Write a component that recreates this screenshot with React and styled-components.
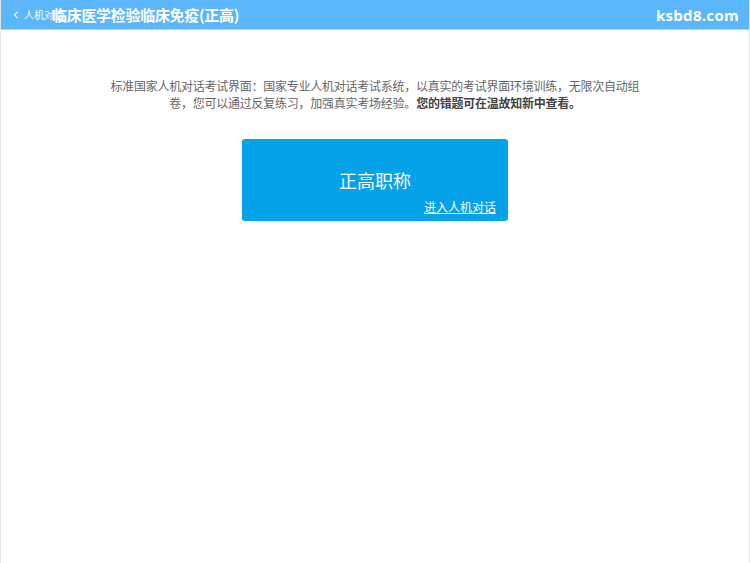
import React from "react";
import styled, { createGlobalStyle } from "styled-components";

const Global = createGlobalStyle`
  html, body { margin: 0; padding: 0; background: #fff; }
  body { font-family: "Noto Sans CJK SC", "Liberation Sans", sans-serif; }
  #root { min-height: 563px; }
`;

const Page = styled.div`
  width: 750px;
  height: 563px;
  box-sizing: border-box;
  border-left: 1px solid #e2e2e2;
  border-right: 1px solid #e2e2e2;
  display: flex;
  flex-direction: column;
  overflow: hidden;
`;

const Header = styled.header`
  position: relative;
  height: 29px;
  background: #5bb6fb;
  border-bottom: 1px solid #a9d8fd;
  display: flex;
  align-items: center;
  justify-content: space-between;
  padding: 0 11px 0 52px;
  color: #fff;
  flex-shrink: 0;
  margin: 0 -1px;
`;

const Back = styled.a`
  position: absolute;
  left: 13px;
  top: 8px;
  font-size: 10px;
  line-height: 14px;
  color: #fff;
  text-decoration: none;
  display: flex;
  align-items: center;
  gap: 5px;
`;

const Title = styled.h1`
  position: relative;
  margin: 0;
  font-size: 15px;
  font-weight: 700;
  letter-spacing: -0.3px;
  line-height: 20px;
`;

const Site = styled.div`
  font-family: "Open Sans", "Liberation Sans", sans-serif;
  font-size: 15px;
  font-weight: 700;
  letter-spacing: 0.3px;
`;

const Main = styled.main`
  display: flex;
  flex-direction: column;
  align-items: center;
  padding-top: 47px;
`;

const Desc = styled.p`
  width: 540px;
  margin: 0;
  text-align: center;
  font-size: 12px;
  line-height: 17px;
  letter-spacing: -0.25px;
  color: #666;
`;

const Strong = styled.b`
  color: #444;
  font-weight: 700;
`;

const Card = styled.button`
  margin-top: 28px;
  width: 266px;
  height: 82px;
  border: none;
  border-radius: 3px;
  background: #05a1e9;
  color: #fff;
  display: flex;
  flex-direction: column;
  align-items: stretch;
  padding: 0 12px 6px;
  box-sizing: border-box;
  font-family: inherit;
  cursor: pointer;
`;

const CardTitle = styled.div`
  flex: 1;
  display: flex;
  align-items: flex-end;
  justify-content: center;
  font-size: 18px;
  line-height: 24px;
  padding-bottom: 7px;
`;

const CardLink = styled.span`
  align-self: flex-end;
  font-size: 12px;
  line-height: 16px;
  text-decoration: underline;
`;

export default function App() {
  return (
    <>
      <Global />
      <Page>
        <Header>
          <Back href="#">
            <svg width="6" height="8" viewBox="0 0 6 8" fill="none">
              <path d="M4.5 0.8L1.5 4L4.5 7.2" stroke="#fff" strokeWidth="1.1" />
            </svg>
            人机对话
          </Back>
          <Title>临床医学检验临床免疫(正高)</Title>
          <Site>ksbd8.com</Site>
        </Header>
        <Main>
          <Desc>
            标准国家人机对话考试界面：国家专业人机对话考试系统，以真实的考试界面环境训练，无限次自动组卷，您可以通过反复练习，加强真实考场经验。
            <Strong>您的错题可在温故知新中查看。</Strong>
          </Desc>
          <Card>
            <CardTitle>正高职称</CardTitle>
            <CardLink>进入人机对话</CardLink>
          </Card>
        </Main>
      </Page>
    </>
  );
}
